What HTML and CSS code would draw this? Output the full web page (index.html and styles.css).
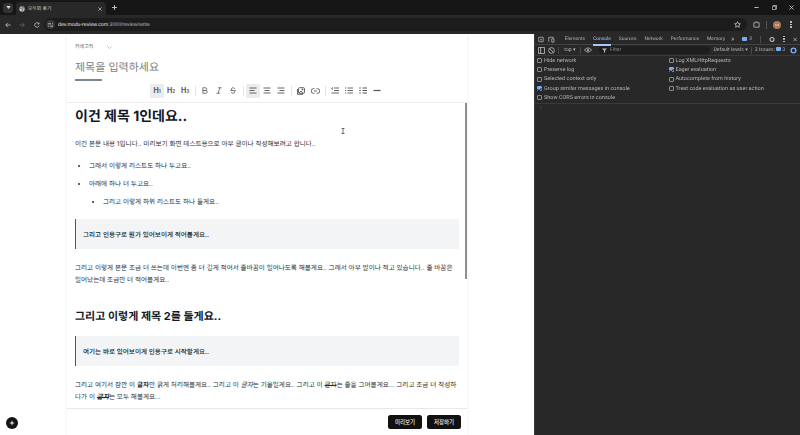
FILE: index.html
```html
<!DOCTYPE html>
<html lang="ko">
<head>
<meta charset="utf-8">
<title>모두의 후기</title>
<link rel="stylesheet" href="styles.css">
</head>
<body>
<div class="window">
  <header class="tabstrip">
    <span class="tabsearch"><svg width="5" height="3" viewBox="0 0 6 4"><path d="M0 0h6L3 4z" fill="#d8d8d8"/></svg></span>
    <div class="tab">
      <svg class="favicon" width="6" height="6" viewBox="0 0 8 8"><circle cx="4" cy="4" r="3.600" fill="#c8c8c8"/><path d="M1 3h3l1 2-2 2.500M4 .5l1 2h2.500" stroke="#333" fill="none" stroke-width=".8"/></svg>
      <span class="tabtitle">모두의 후기</span>
      <svg class="tabclose" width="4" height="4" viewBox="0 0 6 6"><path d="M.5.5l5 5M5.500.5l-5 5" stroke="#d0d0d0" stroke-width="1"/></svg>
    </div>
    <svg class="newtab" width="5" height="5" viewBox="0 0 6 6"><path d="M3 0v6M0 3h6" stroke="#d8d8d8" stroke-width="1"/></svg>
    <div class="winctl">
      <svg width="5" height="5" viewBox="0 0 6 6"><path d="M.5 3h5" stroke="#d8d8d8"/></svg>
      <svg width="5" height="5" viewBox="0 0 6 6"><path d="M.5 1.500h4v4h-4zM1.500 1.500V.5h4v4h-1" stroke="#d8d8d8" fill="none" stroke-width=".8"/></svg>
      <svg width="5" height="5" viewBox="0 0 6 6"><path d="M.5.5l5 5M5.500.5l-5 5" stroke="#d8d8d8" stroke-width=".9"/></svg>
    </div>
  </header>
  <nav class="navbar">
    <svg width="6" height="6" viewBox="0 0 8 8"><path d="M7.500 4H1M4 1L1 4l3 3" stroke="#c8c8c8" fill="none"/></svg>
    <svg class="fwd" width="6" height="6" viewBox="0 0 8 8"><path d="M.5 4H7M4 1l3 3-3 3" stroke="#6c6c6c" fill="none"/></svg>
    <svg class="reload" width="6" height="6" viewBox="0 0 8 8"><path d="M6.800 4.800A3 3 0 1 1 6.200 2M6.700.7v2h-2" stroke="#c8c8c8" fill="none"/></svg>
    <div class="omnibox">
      <span class="siteinfo"><svg width="5" height="4" viewBox="0 0 6 5"><path d="M0 1h3.500M5 1h1M0 4h1M2.500 4H6" stroke="#e0e0e0"/></svg></span>
      <span class="url">dev.modu-review.com<span class="urlpath">:3000/review/write</span></span>
      <svg class="star" width="7" height="7" viewBox="0 0 8 8"><path d="M4 .8l1 2.200 2.300.2-1.700 1.600.5 2.400L4 6 1.900 7.200l.5-2.400L.7 3.200 3 3z" stroke="#e0e0e0" fill="none" stroke-width=".8"/></svg>
    </div>
    <div class="navright">
      <svg width="7" height="7" viewBox="0 0 8 8"><path d="M1 2h2V1h2v1h2v5H1z" stroke="#d0d0d0" fill="none" stroke-width=".8"/></svg>
      <span class="navsep"></span>
      <span class="avatar">KR</span>
      <span class="kebab far"><i></i><i></i><i></i></span>
    </div>
  </nav>
  <div class="content">
    <main class="page">
      <section class="card">
        <div class="meta">
          <div class="category"><span>카테고리</span><svg width="5" height="3" viewBox="0 0 5 3"><path d="M.5.5L2.500 2.500 4.500.5" stroke="#9a9a9a" fill="none" stroke-width=".6"/></svg></div>
          <h2 class="titleinput">제목을 입력하세요</h2>
          <div class="titlerule"></div>
        </div>
        <div class="toolbar">
          <button class="tb on"><b>H<small>1</small></b></button>
          <button class="tb"><b>H<small>2</small></b></button>
          <button class="tb"><b>H<small>3</small></b></button>
          <span class="tbsep"></span>
          <button class="tb"><svg width="6" height="7" viewBox="0 0 7 8"><path d="M1 .8h3a1.600 1.600 0 0 1 0 3.200H1zM1 4h3.400a1.600 1.600 0 0 1 0 3.200H1z" class="ico"/></svg></button>
          <button class="tb"><svg width="6" height="7" viewBox="0 0 7 8"><path d="M2.500.8h4M.5 7.200h4M4.500.8l-2 6.400" class="ico"/></svg></button>
          <button class="tb"><svg width="6" height="7" viewBox="0 0 7 8"><path d="M.3 4h6.400M5.600 2C5.200.4 1.600.3 1.500 2.200 1.500 3 2.200 3.500 3 3.800M1.500 5.800c.3 1.800 4 1.800 4.100 0 0-.6-.3-1-.6-1.300" class="ico"/></svg></button>
          <span class="tbsep"></span>
          <button class="tb on"><svg width="8" height="7" viewBox="0 0 8 7"><path d="M.5 1h7M.5 3.500h5M.5 6h7" class="ico"/></svg></button>
          <button class="tb"><svg width="8" height="7" viewBox="0 0 8 7"><path d="M.5 1h7M1.500 3.500h5M.5 6h7" class="ico"/></svg></button>
          <button class="tb"><svg width="8" height="7" viewBox="0 0 8 7"><path d="M.5 1h7M2.500 3.500h5M.5 6h7" class="ico"/></svg></button>
          <span class="tbsep"></span>
          <button class="tb"><svg width="8" height="8" viewBox="0 0 8 8"><rect x="1.500" y=".7" width="6" height="5.600" rx="1" class="ico"/><path d="M.5 2v5.300H6" class="ico"/><circle cx="5.500" cy="2.400" r=".9" fill="#555"/><path d="M2 6l2-2 2.500 2.300" class="ico"/></svg></button>
          <button class="tb"><svg width="9" height="6" viewBox="0 0 9 6"><path d="M3.500 5.300H2.500a2.300 2.300 0 0 1 0-4.600h1M5.500.7h1a2.300 2.300 0 0 1 0 4.600h-1M3 3h3" class="ico"/></svg></button>
          <span class="tbsep"></span>
          <button class="tb"><svg width="8" height="7" viewBox="0 0 8 7"><path d="M3 1h5M3 3.500h5M.5 6h7.500M2 .5L.5 1.500 2 2.500" class="ico"/></svg></button>
          <button class="tb"><svg width="8" height="7" viewBox="0 0 8 7"><path d="M2.500 1H8M2.500 3.500H8M2.500 6H8M0 1h1.200M0 3.500h1.200M0 6h1.200" class="ico"/></svg></button>
          <button class="tb"><svg width="8" height="7" viewBox="0 0 8 7"><path d="M3.500 1H8M3.500 3.500H8M3.500 6H8M.3 1h1.500M.3 3.500h1.500M.3 6h1.500" class="ico thick"/></svg></button>
          <button class="tb"><svg width="8" height="7" viewBox="0 0 8 7"><path d="M.5 3.500h7" class="ico thick"/></svg></button>
        </div>
        <div class="editor">
          <div class="scrollthumb"></div>
          <h1>이건 제목 1인데요..</h1>
          <p>이건 본문 내용 1입니다.. 미리보기 화면 테스트용으로 아무 글이나 작성해보려고 합니다..</p>
          <ul>
            <li>그래서 이렇게 리스트도 하나 두고요..</li>
            <li>아래에 하나 더 두고요..
              <ul><li>그리고 이렇게 하위 리스트도 하나 둘게요..</li></ul>
            </li>
          </ul>
          <blockquote>그리고 인용구로 뭔가 있어보이게 적어볼게요..</blockquote>
          <p>그리고 이렇게 본문 조금 더 쓰는데 이번엔 좀 더 길게 적어서 줄바꿈이 일어나도록 해볼게요.. 그래서 아무 말이나 적고 있습니다.. 줄 바꿈은 일어났는데 조금만 더 적어볼게요..</p>
          <h2>그리고 이렇게 제목 2를 둘게요..</h2>
          <blockquote>여기는 바로 있어보이게 인용구로 시작할게요..</blockquote>
          <p>그리고 여기서 잠깐 이 <b>글자</b>만 굵게 처리해볼게요.. 그리고 이 <em>글자</em>는 기울일게요.. 그리고 이 <s>글자</s>는 줄을 그어볼게요... 그리고 조금 더 작성하다가 이 <s><b><em>글자</em></b></s>는 모두 해볼게요...</p>
        </div>
        <footer class="actions">
          <button class="btn">미리보기</button>
          <button class="btn">저장하기</button>
        </footer>
      </section>
      <span class="fab"><svg width="6" height="6" viewBox="0 0 8 8"><path d="M4 .3l1 2.700L7.700 4 5 5 4 7.700 3 5 .3 4 3 3z" fill="#d8d8d8"/></svg></span>
      <svg class="cursor" width="4" height="6" viewBox="0 0 4 6"><path d="M.5.5h3M.5 5.500h3M2 .5v5" stroke="#333" stroke-width=".7" fill="none"/></svg>
    </main>
    <aside class="devtools">
      <div class="dtabs">
        <svg width="7" height="7" viewBox="0 0 8 8"><path d="M1 1h6v6H1z" stroke="#b8b8b8" fill="none"/><path d="M3 3l3 1.200-1.300.5-.5 1.300z" fill="#b8b8b8"/></svg>
        <svg class="devicon" width="8" height="7" viewBox="0 0 9 8"><path d="M1 7V1h6v1M5 3h3v4.500H5z" stroke="#b8b8b8" fill="none"/></svg>
        <span>Elements</span><span class="active">Console</span><span>Sources</span><span>Network</span><span>Performance</span><span>Memory</span>
        <span class="more">»</span>
        <span class="right"><i class="badge"></i>3</span>
        <span class="dsep"></span>
        <svg width="7" height="7" viewBox="0 0 8 8"><circle cx="4" cy="4" r="2.700" stroke="#c4c4c4" fill="none" stroke-width="1.400"/></svg>
        <span class="kebab dim"><i></i><i></i><i></i></span>
        <svg width="5" height="5" viewBox="0 0 6 6"><path d="M.5.5l5 5M5.500.5l-5 5" stroke="#c4c4c4"/></svg>
      </div>
      <div class="dfilter">
        <svg width="7" height="7" viewBox="0 0 8 8"><path d="M.5.5h7v7h-7zM3 .5v7" stroke="#b8b8b8" fill="none"/></svg>
        <svg width="7" height="7" viewBox="0 0 8 8"><circle cx="4" cy="4" r="3.300" stroke="#b8b8b8" fill="none"/><path d="M1.700 1.700l4.600 4.600" stroke="#b8b8b8"/></svg>
        <span class="dsep"></span>
        <span class="ctx">top ▾</span>
        <span class="dsep"></span>
        <svg width="8" height="6" viewBox="0 0 9 6"><path d="M.5 3C3 0 6 0 8.500 3 6 6 3 6 .5 3z" stroke="#b8b8b8" fill="none"/><circle cx="4.500" cy="3" r="1.200" fill="#b8b8b8"/></svg>
        <div class="filterbox"><svg width="5" height="5" viewBox="0 0 6 6"><path d="M0 .5h6L3.700 3v2.800L2.300 5V3z" fill="#b8b8b8"/></svg>Filter</div>
        <span class="levels">Default levels ▾</span>
        <span class="dsep"></span>
        <span class="issues">3 Issues: <i class="badge"></i>3</span>
        <svg class="gear" width="7" height="7" viewBox="0 0 8 8"><circle cx="4" cy="4" r="2.700" stroke="#7cacf8" fill="none" stroke-width="1.600"/></svg>
      </div>
      <div class="settings">
        <div class="setcol">
          <label class="opt"><i class="box"></i>Hide network</label>
          <label class="opt"><i class="box"></i>Preserve log</label>
          <label class="opt"><i class="box"></i>Selected context only</label>
          <label class="opt"><i class="box checked"></i>Group similar messages in console</label>
          <label class="opt"><i class="box"></i>Show CORS errors in console</label>
        </div>
        <div class="setcol">
          <label class="opt"><i class="box"></i>Log XMLHttpRequests</label>
          <label class="opt"><i class="box checked"></i>Eager evaluation</label>
          <label class="opt"><i class="box"></i>Autocomplete from history</label>
          <label class="opt"><i class="box"></i>Treat code evaluation as user action</label>
        </div>
      </div>
      <div class="prompt">›</div>
    </aside>
  </div>
</div>
</body>
</html>
```
FILE: styles.css
```css
* { box-sizing: border-box; }
html, body { margin: 0; height: 100%; overflow: hidden; }
body { font-family: Inter, "Noto Sans CJK KR", sans-serif; background: #fff; text-rendering: geometricPrecision; }
.window { width: 800px; height: 435px; display: flex; flex-direction: column; filter: blur(0.3px); }

.tabstrip { height: 15px; flex: none; background: #161616; display: flex; align-items: center; padding-left: 3px; }
.tabsearch { width: 10px; height: 10px; border-radius: 3px; background: #333; display: flex; align-items: center; justify-content: center; }
.tab { width: 90px; height: 13px; margin: 2px 0 0 3px; background: #282828; border-radius: 4px 4px 0 0; display: flex; align-items: center; padding: 0 4px 0 3px; gap: 3px; color: #d4d4d4; font-size: 4.800px; }
.tabtitle { flex: 1; }
.newtab { margin-left: 6px; }
.winctl { margin-left: auto; display: flex; gap: 12.500px; padding-right: 6px; }

.navbar { height: 19px; flex: none; background: #282828; display: flex; align-items: center; padding-left: 5px; }
.fwd { margin-left: 8px; }
.reload { margin-left: 9px; }
.omnibox { margin-left: 4px; width: 703px; height: 13px; background: #1c1c1c; border-radius: 7px; display: flex; align-items: center; color: #c0c0c0; font: 5.200px "Liberation Sans", sans-serif; padding: 0 6px 0 2px; }
.siteinfo { width: 9px; height: 9px; border-radius: 5px; background: #3a3a3a; display: flex; align-items: center; justify-content: center; margin-right: 3px; }
.url { color: #e8e8e8; white-space: nowrap; }
.urlpath { color: #bcbcbc; }
.star { margin-left: auto; }
.navright { display: flex; align-items: center; gap: 6px; margin-left: 6px; }
.navsep { width: 1px; height: 8px; background: #555; }
.avatar { width: 8px; height: 8px; border-radius: 50%; background: #a9795a; color: #f0e0d0; font: 3px "Liberation Sans", sans-serif; display: flex; align-items: center; justify-content: center; }
.kebab { display: flex; flex-direction: column; gap: 1px; width: 2px; }
.kebab.far { margin-left: 3px; }
.kebab i { width: 1.500px; height: 1.500px; background: #d8d8d8; border-radius: 50%; }
.kebab.dim i { background: #c4c4c4; }

.content { flex: 1; min-height: 0; display: flex; }
.page { width: 534px; flex: none; position: relative; background: #fff; display: flex; justify-content: center; }
.card { width: 400px; height: 100%; box-shadow: 0 0 3px rgba(0, 0, 0, .08); display: flex; flex-direction: column; }
.meta { padding: 9px 8px 0; height: 49px; flex: none; }
.category { display: flex; align-items: center; gap: 14px; font-size: 5px; line-height: 8px; color: #666; }
.titleinput { margin: 8px 0 0; font-size: 11px; line-height: 16px; font-weight: 400; color: #808080; }
.titlerule { width: 27px; height: 2px; margin-top: 4px; background: #7c8591; }

.toolbar { height: 19px; flex: none; display: flex; align-items: center; justify-content: center; padding-bottom: 4px; }
.tb { width: 14px; height: 14px; padding: 0; border: 0; background: none; display: flex; align-items: center; justify-content: center; border-radius: 1px; font: 7px Inter, sans-serif; color: #555; }
.tb.on { background: #ececec; }
.tb small { font-size: 4.500px; }
.tbsep { width: 1px; height: 10px; background: #e4e4e4; margin: 0 2.500px; }
.ico { stroke: #555; stroke-width: .9; fill: none; }
.ico.thick { stroke-width: 1.200; }

.editor { flex: 1; min-height: 0; position: relative; overflow: hidden; border-top: 1px solid #ededed; padding: 4px 8px 0; font-size: 6.580px; line-height: 12px; color: #2e2e2e; }
.scrollthumb { position: absolute; top: 0; right: 0; width: 2px; height: 176px; background: #8f8f8f; }
.editor h1 { margin: 0; font-size: 14px; line-height: 20px; font-weight: 700; color: #111827; }
.editor h2 { margin: 22px 0 0; font-size: 11px; line-height: 16px; font-weight: 700; color: #111827; }
.editor p { margin: 11px 0 0; }
.editor > ul { margin: 10px 0 0; padding-left: 14px; list-style: disc; }
.editor ul ul { margin: 6px 0 0; padding-left: 14px; list-style: disc; }
.editor li + li { margin-top: 6px; }
.editor blockquote { margin: 11px 0 0; height: 30px; padding: 1px 7px 0; display: flex; align-items: center; background: #f3f4f6; border-left: 1.500px solid #31606f; font-weight: 500; color: #222; }
.editor h2 + blockquote { margin-top: 12px; }
.editor blockquote + p { margin-top: 13px; }

.actions { height: 27px; flex: none; border-top: 1px solid #e8e8e8; display: flex; align-items: center; justify-content: flex-end; gap: 5px; padding: 0 6px 0 0; }
.btn { width: 34px; height: 14px; padding: 0; border: 0; border-radius: 2.500px; background: #111; color: #eee; font: 500 5.500px "Noto Sans CJK KR", sans-serif; }

.fab { position: absolute; left: 6px; bottom: 6px; width: 12px; height: 12px; border-radius: 50%; background: #151515; display: flex; align-items: center; justify-content: center; }
.cursor { position: absolute; left: 341px; top: 94px; }

.devtools { width: 266px; flex: none; background: #282828; color: #b4b4b4; font: 5.500px Roboto, "Liberation Sans", sans-serif; display: flex; flex-direction: column; border-left: 1px solid #3c3c3c; }
.dtabs { height: 11px; flex: none; display: flex; align-items: center; gap: 8px; padding: 0 3px; border-bottom: 1px solid #444; font-size: 4.900px; }
.dtabs .devicon { margin: 0 2px 0 -4px; }
.dtabs .active { color: #a8c7fa; box-shadow: 0 2px 0 #a8c7fa; padding: 2px 0; }
.dtabs .right { margin-left: auto; display: flex; align-items: center; gap: 1px; }
.more { font-size: 7px; margin-left: -2px; }
.dsep { width: 1px; height: 7px; background: #4a4a4a; flex: none; }
.badge { display: inline-block; width: 5px; height: 4px; background: #7cacf8; border-radius: 1px; margin-right: 1px; }
.dfilter { height: 11px; flex: none; display: flex; align-items: center; gap: 3px; padding: 0 3px; border-bottom: 1px solid #3a3a3a; white-space: nowrap; font-size: 5.100px; }
.ctx { width: 14px; text-align: center; margin-left: 1px; }
.filterbox { width: 112px; height: 8px; border-radius: 4px; background: #1e1e1e; display: flex; align-items: center; gap: 3px; padding-left: 3px; color: #8a8a8a; margin-left: 4px; }
.levels { margin-left: auto; }
.gear { margin-left: 2px; }
.settings { display: flex; padding: 0 0 1px 2px; border-bottom: 1px solid #3a3a3a; }
.setcol { width: 133px; display: flex; flex-direction: column; }
.opt { height: 9.300px; display: flex; align-items: center; gap: 2px; }
.box { width: 5px; height: 5px; border: .7px solid #8a8a8a; border-radius: 1px; display: flex; align-items: center; justify-content: center; }
.box.checked { background: #7cacf8; border-color: #7cacf8; }
.box.checked::after { content: ""; width: 1.500px; height: 3px; border: solid #1f1f1f; border-width: 0 .7px .7px 0; transform: rotate(45deg); }
.prompt { padding: 1px 0 0 5px; color: #777; line-height: 7px; }
```
